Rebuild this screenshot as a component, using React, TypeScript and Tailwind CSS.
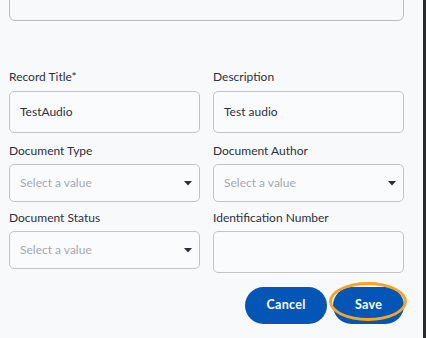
import React from "react";

const font = { fontFamily: "Lato, 'Noto Sans', sans-serif" };

function Caret() {
  return (
    <svg width="8" height="5" viewBox="0 0 8 5" className="shrink-0">
      <path d="M0 0 H8 L4 4.5 Z" fill="#2b2f3a" />
    </svg>
  );
}

function Label({ children }: { children: React.ReactNode }) {
  return <div className="text-[12px] leading-[14px] text-[#2c3140] h-[14px]">{children}</div>;
}

function TextBox({ value, h }: { value?: string; h: string }) {
  return (
    <div className={`${h} mt-[7px] border border-[#c4c4c4] rounded-[5px] bg-[#fafbfc] flex items-center px-[10px] text-[12px] text-[#2c3140]`}>
      {value}
    </div>
  );
}

function Select() {
  return (
    <div className="h-[38px] mt-[6px] border border-[#c4c4c4] rounded-[5px] bg-[#fafbfc] flex items-center justify-between pl-[10px] pr-[7px] text-[12px] text-[#a5a9b6]">
      <span>Select a value</span>
      <Caret />
    </div>
  );
}

export default function App() {
  return (
    <div className="flex w-[426px] h-[338px] overflow-hidden" style={font}>
      <div className="w-[423px] h-full bg-[#f8f9fb] pl-[9px] pr-[19px]">
        <div className="h-[40px] -mt-[19px] border border-[#bdbdbd] rounded-[6px]" />
        <div className="grid grid-cols-[191px_191px] gap-x-[13px] mt-[49px]">
          <div>
            <Label>Record Title*</Label>
            <TextBox value="TestAudio" h="h-[42px]" />
          </div>
          <div>
            <Label>Description</Label>
            <TextBox value="Test audio" h="h-[42px]" />
          </div>
          <div className="mt-[11px]">
            <Label>Document Type</Label>
            <Select />
          </div>
          <div className="mt-[11px]">
            <Label>Document Author</Label>
            <Select />
          </div>
          <div className="mt-[9px]">
            <Label>Document Status</Label>
            <Select />
          </div>
          <div className="mt-[9px]">
            <Label>Identification Number</Label>
            <div className="h-[42px] mt-[6px] border border-[#c4c4c4] rounded-[5px] bg-[#fafbfc]" />
          </div>
        </div>
        <div className="flex justify-end gap-[6px] mt-[14px]">
          <button className="w-[82px] h-[37px] rounded-full bg-[#0456b6] text-white text-[12.5px] font-bold tracking-[0.3px]">
            Cancel
          </button>
          <div className="relative">
            <button className="w-[71px] h-[37px] rounded-full bg-[#0456b6] text-white text-[12.5px] font-bold tracking-[0.3px]">
              Save
            </button>
            <div className="absolute left-[-4px] top-[-5px] w-[78px] h-[39px] rounded-[50%] border-[3px] border-[#f5a623]" />
          </div>
        </div>
      </div>
      <div className="w-[3px] h-full bg-[#2b2b2b]" />
    </div>
  );
}
